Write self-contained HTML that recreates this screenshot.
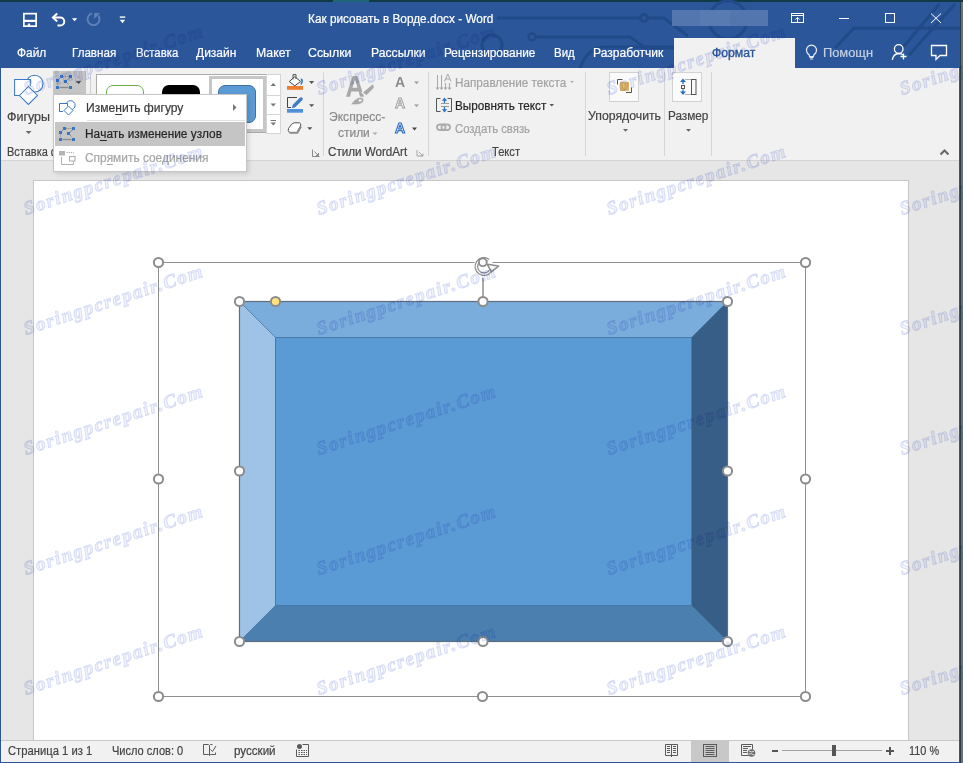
<!DOCTYPE html>
<html><head><meta charset="utf-8">
<style>
*{box-sizing:border-box;margin:0;padding:0}
html,body{width:963px;height:763px;overflow:hidden;background:#5a7886}
body{position:relative;font-family:"Liberation Sans",sans-serif;font-size:12px;color:#444}
.a{position:absolute}
.t{position:absolute;white-space:nowrap;line-height:1;transform-origin:0 0}
svg{position:absolute;overflow:visible}
.t{-webkit-text-stroke:0.2px currentColor}
u{text-decoration:none;border-bottom:1px solid currentColor;display:inline-block;line-height:0.95}
.wm{position:absolute;white-space:nowrap;line-height:1;font-family:"Liberation Serif",serif;font-style:italic;font-weight:bold;font-size:19px;
 letter-spacing:1.65px;color:rgba(230,233,250,0.5);-webkit-text-stroke:1px rgba(190,197,240,0.55);mix-blend-mode:multiply;
 transform-origin:0 15.9px;transform:rotate(-18.2deg);pointer-events:none}
</style></head><body>
<!-- window frame -->
<div class="a" style="left:0;top:0;width:960px;height:763px;background:#2b579a"></div>
<div class="a" style="left:960px;top:0;width:1px;height:763px;background:#2f3d43"></div>
<div class="a" style="left:0;top:0;width:963px;height:2px;background:#103a46"></div>
<div class="a" style="left:333px;top:0;width:36px;height:2px;background:#1f6478"></div>

<!-- circuit pattern -->
<svg style="left:0;top:0" width="960" height="68">
 <g stroke="#214b88" stroke-width="3.2" fill="none">
  <path d="M497 18 H640"/><circle cx="644" cy="18" r="3.5"/><path d="M648 18 H664 L688 36"/>
  <circle cx="532" cy="37" r="3.5" stroke-width="2.5"/><path d="M536 37 H630 L646 48 H674"/>
  <path d="M580 68 Q588 47 605 47 H674"/>
  <circle cx="492" cy="45" r="10"/>
  <circle cx="728" cy="20" r="19"/>
  <path d="M835 48 L854 28.2 H960"/>
  <path d="M901.5 49 L939.5 4" stroke-width="3.2"/><path d="M909 55 L955 4" stroke-width="3.2"/>
 </g>
</svg>

<!-- QAT -->
<svg style="left:0;top:0" width="140" height="36">
 <g fill="none" stroke="#fff" stroke-width="1.7">
  <rect x="23.85" y="13.65" width="12.3" height="12.5"/>
 </g>
 <rect x="24" y="19.8" width="12" height="2.2" fill="#fff"/>
 <rect x="27.8" y="23.6" width="2.4" height="2.6" fill="#fff"/>
 <path d="M53.5 17.4 H60.2 A4.1 4.1 0 0 1 60.2 25.6 H57.5" fill="none" stroke="#fff" stroke-width="2"/>
 <path d="M57.2 13.4 L53 17.4 L57.2 21.4" fill="none" stroke="#fff" stroke-width="2.1"/>
 <path d="M72 18.2 H77.2 L74.6 21.2 Z" fill="#fff"/>
 <path d="M92.1 13.3 A6.0 6.0 0 1 0 98.4 15.6" fill="none" stroke="#5e80b8" stroke-width="1.9"/>
 <path d="M94.2 13 H100 L94.2 19 Z" fill="#5e80b8"/>
 <rect x="119.8" y="16.4" width="5.4" height="1.4" fill="#fff"/>
 <path d="M119.8 19.8 H125.2 L122.5 23.2 Z" fill="#fff"/>
</svg>

<!-- blurred account name -->
<div class="a" style="left:672px;top:10px;width:96px;height:16px;background:#5276ad"></div>
<div class="a" style="left:700px;top:10px;width:30px;height:16px;background:#587cb2"></div>

<!-- window controls -->
<svg style="left:780px;top:0" width="180" height="36">
 <g fill="none" stroke="#fff" stroke-width="1">
  <rect x="11.5" y="13.5" width="12" height="9"/>
  <path d="M11.5 15.5 H23.5"/>
  <path d="M17.5 22 V17.5 M15.3 19.6 L17.5 17.4 L19.7 19.6"/>
  <path d="M59 18.5 H69"/>
  <rect x="105.5" y="13.5" width="9" height="9"/>
  <path d="M151 13.5 L161 23 M161 13.5 L151 23"/>
 </g>
</svg>

<!-- Format tab -->
<div class="a" style="left:674px;top:38px;width:121px;height:30px;background:#f1f1f1"></div>

<!-- tab icons -->
<svg style="left:800px;top:40px" width="160" height="25">
 <g fill="none" stroke="#e3e9f2" stroke-width="1.2">
  <path d="M9 14.5 A5 5 0 1 1 14 14.5 L13.5 16.5 H9.5 Z"/>
  <path d="M9.5 17.5 H13.5 M10 19 H13"/>
 </g>
 <g fill="none" stroke="#fff" stroke-width="1.3">
  <circle cx="98.7" cy="9" r="4.3"/>
  <path d="M92.3 19.8 Q93.5 13.8 98.7 13.5 Q101.5 13.5 103 15"/>
  <path d="M103.5 13.5 V19.5 M100.5 16.5 H106.5"/>
  <path d="M131.5 5.5 H146.5 V15.5 H140 L136 19.5 V15.5 H131.5 Z"/>
 </g>
</svg>

<!-- ribbon -->
<div class="a" style="left:1px;top:68px;width:958px;height:93px;background:#f1f1f1;border-bottom:1px solid #d4d4d4"></div>
<div class="a" style="left:323px;top:72px;width:1px;height:84px;background:#d6d6d6"></div>
<div class="a" style="left:428px;top:72px;width:1px;height:84px;background:#d6d6d6"></div>
<div class="a" style="left:585px;top:72px;width:1px;height:84px;background:#d6d6d6"></div>
<div class="a" style="left:664px;top:72px;width:1px;height:84px;background:#d6d6d6"></div>
<div class="a" style="left:711px;top:72px;width:1px;height:84px;background:#d6d6d6"></div>

<!-- Shapes big icon -->
<svg style="left:0;top:68px" width="60" height="70">
 <circle cx="34.6" cy="15.6" r="8.4" fill="#fff" stroke="#3c7ac4" stroke-width="1.05"/>
 <rect x="14.6" y="11.4" width="15.7" height="16" fill="#fff"/>
 <g fill="none" stroke="#3c7ac4" stroke-width="1.05">
  <path d="M30.3 18 V11.4 H14.6 V27.4 H19"/>
 </g>
 <path d="M28.4 18.5 L37.5 27.5 L28.4 36.4 L19.5 27.5 Z" fill="#fff" stroke="#3c7ac4" stroke-width="1.05"/>
 <path d="M25.6 63 H31.6 L28.6 66 Z" fill="#6a6a6a"/>
</svg>

<!-- Edit shape button (pressed) -->
<div class="a" style="left:53px;top:71px;width:33px;height:24px;background:#c5c5c5"></div>
<svg style="left:0;top:0" width="100" height="100">
 <g stroke="#8a8a8a" stroke-width="1" fill="none">
  <path d="M62.5 76.5 H69" stroke-dasharray="1.2 0.8"/>
  <path d="M58 80 L61 77"/>
  <path d="M70 77.5 L66 81"/>
  <path d="M66 82 L68.5 84.5"/>
  <path d="M59.5 87.5 H68.5" stroke-width="1.3"/>
  <path d="M57.5 82.5 V85" stroke-dasharray="1 1"/>
 </g>
 <g fill="#3476c4">
  <rect x="60" y="75" width="3" height="3"/><rect x="69" y="75" width="3" height="3"/>
  <rect x="56" y="79" width="3" height="3"/><rect x="64" y="80" width="3" height="3"/>
  <rect x="56" y="86" width="3" height="3"/><rect x="69" y="86" width="3" height="3"/>
 </g>
 <path d="M76 81.2 H81.2 L78.6 84 Z" fill="#444"/>
</svg>

<!-- Style gallery -->
<div class="a" style="left:90px;top:74px;width:1px;height:60px;background:#d0d0d0"></div>
<div class="a" style="left:96px;top:74px;width:171px;height:59px;background:#fff;border:1px solid #ababab;border-right:none"></div>
<div class="a" style="left:106px;top:85px;width:38px;height:38px;border:1.5px solid #70ad47;border-radius:7px;background:#fff"></div>
<div class="a" style="left:162px;top:84.5px;width:38px;height:38px;border-radius:7px;background:#000"></div>
<div class="a" style="left:209px;top:76px;width:57px;height:56px;border:3.5px solid #c6c6c6;background:#fff"></div>
<div class="a" style="left:218px;top:85px;width:38px;height:38px;border:1px solid #41719c;border-radius:7px;background:#5b9bd5"></div>
<div class="a" style="left:266px;top:74px;width:15px;height:60px;background:#fff;border:1px solid #d5d5d5"></div>
<div class="a" style="left:266px;top:95px;width:15px;height:1px;background:#d5d5d5"></div>
<div class="a" style="left:266px;top:114px;width:15px;height:1px;background:#d5d5d5"></div>
<svg style="left:266px;top:74px" width="15" height="60">
 <path d="M4.5 12 H10 L7.25 9 Z" fill="#777"/>
 <path d="M4.5 29.5 H10 L7.25 32.5 Z" fill="#777"/>
 <rect x="4.5" y="46" width="5.5" height="1" fill="#777"/>
 <path d="M4.5 48.5 H10 L7.25 51.5 Z" fill="#777"/>
</svg>

<!-- fill / outline / effects -->
<svg style="left:0;top:0" width="330" height="170">
 <path d="M294.8 76.6 L300.6 81.5 L294.8 85.8 L289.3 81.5 Z" fill="#fff" stroke="#444" stroke-width="1"/>
 <path d="M293 79.5 V74.6 H296 V79" fill="none" stroke="#555" stroke-width="1"/>
 <path d="M300.5 78.5 Q304 78.5 302.5 83 L300.8 85.5 Q300 83 301.5 81.5 Z" fill="#2e72c3"/>
 <rect x="287" y="86" width="16" height="3.8" fill="#ed7d31"/>
 <path d="M309 81 H314.2 L311.6 84 Z" fill="#555"/>
 <path d="M297 97.5 H287.5 V107.5 H291" fill="none" stroke="#444" stroke-width="1"/>
 <path d="M291.8 108.2 L292.8 104.8 L299.8 97.8 Q301.2 96.6 302.3 97.8 Q303.4 99 302.2 100.2 L295.2 107.2 Z" fill="#3c7cc6"/>
 <rect x="287" y="109" width="16" height="3.7" fill="#4f91d6"/>
 <path d="M309 104.2 H314.2 L311.6 107 Z" fill="#555"/>
 <path d="M288.5 128.5 Q292 122.8 294 122.8 H299.5 Q301.5 123.5 300.5 126 L297 132.5 H289.5 Q287.5 131 288.5 128.5 Z" fill="#fff" stroke="#555" stroke-width="1"/>
 <path d="M289.5 132.8 H297.3 L301 126.5" fill="none" stroke="#8a8a8a" stroke-width="2"/>
 <path d="M307.2 127.3 H312.4 L309.8 130 Z" fill="#555"/>
 <path d="M312.5 149.5 V156.5 H319.5" fill="none" stroke="#8a8a8a" stroke-width="1"/>
 <path d="M314.5 151.5 L318.5 155.5 M316 155.5 H318.5 V153" fill="none" stroke="#8a8a8a" stroke-width="1"/>
</svg>

<!-- WordArt group icons -->
<svg style="left:330px;top:68px" width="100" height="92">
 <text x="65" y="19" font-family="Liberation Sans" font-weight="bold" font-size="14" fill="#8c8c8c">A</text>
 <path d="M84 13.5 H89 L86.5 16 Z" fill="#9a9a9a"/>
 <text x="65" y="40" font-family="Liberation Sans" font-weight="bold" font-size="14" fill="#f1f1f1" stroke="#a0a0a0" stroke-width="0.9">A</text>
 <path d="M84 36.5 H89 L86.5 39 Z" fill="#9a9a9a"/>
 <text x="65" y="65" font-family="Liberation Sans" font-weight="bold" font-size="14" fill="#e8f0fb" stroke="#2f6fc0" stroke-width="1.1">A</text>
 <path d="M82 59.5 H87 L84.5 62.5 Z" fill="#444"/>
 <path d="M42.5 64.5 H47.5 L45 67 Z" fill="#aaa"/>
 <path d="M87 82 V88 H93" fill="none" stroke="#a8a8a8" stroke-width="1"/>
 <path d="M89 84 L93 88 M90.5 88 H93 V85.5" fill="none" stroke="#a8a8a8" stroke-width="1"/>
</svg>

<svg style="left:0;top:0" width="400" height="170">
 <path fill-rule="evenodd" d="M346 96.7 L352.6 76 H357.3 L364 96.7 H360 L358.7 91.5 H351.3 L350 96.7 Z M352.4 87.8 L355 80 L357.6 87.8 Z" fill="#a8a8a8"/>
 <path d="M373.5 83 L374.5 88 L366.5 96 L362 92.5 Z" fill="#a8a8a8" stroke="#f1f1f1" stroke-width="1.2"/>
 <path d="M350.5 104.8 Q354 99 358.5 97.5 Q363 96.5 364 100 Q363.5 104 357 104.8 Z" fill="#a8a8a8" stroke="#f1f1f1" stroke-width="0.8"/>
 <path d="M358.5 99.5 Q361.5 98.7 362 100.5 Q361 102 359 101.5 Z" fill="#f4f4f8"/>
</svg>
<!-- Text group icons -->
<svg style="left:0;top:0" width="600" height="170">
 <g stroke="#a8a8a8" stroke-width="1" fill="none">
  <path d="M437.5 75 V89 M441.5 75 V89 M445.5 83 V89 M449.5 83 V89"/>
  <path d="M444.5 81.5 L447.8 74 L451 81.5 M445.8 79 H449.8"/>
 </g>
 <path d="M435.5 87.5 H439.5 L437.5 90 Z M439.5 87.5 H443.5 L441.5 90 Z M443.5 87.5 H447.5 L445.5 90 Z M447.5 87.5 H451.5 L449.5 90 Z" fill="#a8a8a8"/>
 <path d="M570 81 H574 L572 83 Z" fill="#aaa"/>
 <g stroke="#555" stroke-width="1" fill="none">
  <path d="M440.5 98.5 H436.5 V111.5 H440.5 M447.5 98.5 H451.5 V111.5 H447.5"/>
 </g>
 <path d="M441 103.5 H449 M441 106.5 H449" stroke="#9a9a9a" stroke-width="1"/>
 <path d="M444.5 97.5 L441.8 100.8 H447.2 Z M444.5 112.5 L441.8 109.2 H447.2 Z" fill="#2e72c3"/>
 <path d="M444.5 100 V103 M444.5 107 V110" stroke="#2e72c3" stroke-width="1.3"/>
 <path d="M549.5 104 H554 L551.75 106.5 Z" fill="#555"/>
 <g stroke="#ababab" stroke-width="1.8" fill="none">
  <rect x="437" y="124.5" width="8.5" height="5.5" rx="2.75"/>
  <rect x="441.5" y="124.5" width="8.5" height="5.5" rx="2.75"/>
 </g>
</svg>

<!-- Arrange / Size -->
<div class="a" style="left:609px;top:72px;width:30px;height:30px;background:#fafafa;border:1px solid #d2d2d2"></div>
<div class="a" style="left:672px;top:72px;width:30px;height:30px;background:#fafafa;border:1px solid #d2d2d2"></div>
<svg style="left:0;top:0" width="720" height="170">
 <rect x="620" y="82" width="9" height="9" fill="#e3b76a"/>
 <path d="M617.5 84.5 V79.5 H622.5 M626 92.5 H631.5 V87.5" fill="none" stroke="#555" stroke-width="1"/>
 <path d="M683 78.5 L680 82 H686 Z M683 95 L680 91.5 H686 Z" fill="#2e6fbf"/>
 <path d="M683 81.5 V84 M683 89.5 V92" stroke="#2e6fbf" stroke-width="1.4"/>
 <rect x="681.5" y="85.5" width="3" height="3" fill="none" stroke="#555" stroke-width="1"/>
 <path d="M685.5 79.5 H690.5 M685.5 94.5 H690.5" stroke="#666" stroke-dasharray="1 1"/>
 <rect x="691.5" y="79.5" width="4.5" height="15" fill="none" stroke="#555" stroke-width="1"/>
 <path d="M623 129 H628 L625.5 131.8 Z" fill="#666"/>
 <path d="M686 129 H691 L688.5 131.8 Z" fill="#666"/>
</svg>
<!-- collapse arrow -->
<svg style="left:935px;top:145px" width="20" height="12">
 <path d="M5.5 9.5 L9.5 5.5 L13.5 9.5" fill="none" stroke="#666" stroke-width="2"/>
</svg>

<!-- document area -->
<div class="a" style="left:1px;top:161px;width:958px;height:580px;background:#e6e6e6"></div>
<div class="a" style="left:33px;top:180px;width:876px;height:561px;background:#fff;border:1px solid #c6c6c6;border-bottom:none"></div>

<!-- shape -->
<svg style="left:0;top:0" width="963" height="763">
 <polygon points="239,301 728,301 692,337 275,337" fill="#7aacdc"/>
 <polygon points="239,301 275,337 275,606 239,642" fill="#9fc3e7"/>
 <polygon points="728,301 728,642 692,606 692,337" fill="#375e87"/>
 <polygon points="239,642 275,606 692,606 728,642" fill="#4a7fb0"/>
 <rect x="275" y="337" width="417" height="269" fill="#5b9bd5"/>
 <g stroke="#41719c" stroke-width="1" fill="none" stroke-opacity="0.8">
  <path d="M239.5 301.5 L275.5 337.5 H691.5 L727.5 301.5 M275.5 337.5 V605.5 H691.5 V337.5 M239.5 641.5 L275.5 605.5 M691.5 605.5 L727.5 641.5"/>
 </g>
 <rect x="239.5" y="301.5" width="488" height="340" fill="none" stroke="#5f6f80" stroke-width="1.2"/>
 <!-- selection frame -->
 <rect x="158.5" y="262.5" width="647" height="434" fill="none" stroke="#8f8f8f" stroke-width="1"/>
 <path d="M483 276 V297" stroke="#8f8f8f" stroke-width="1.5"/>
 <g fill="#fff" stroke="#8c8c8c" stroke-width="2">
  <circle cx="158.5" cy="262.5" r="4.6"/><circle cx="805.5" cy="262.5" r="4.6"/>
  <circle cx="158.5" cy="479" r="4.6"/><circle cx="805.5" cy="479" r="4.6"/>
  <circle cx="158.5" cy="696.5" r="4.6"/><circle cx="482.5" cy="696.5" r="4.6"/><circle cx="805.5" cy="696.5" r="4.6"/>
  <circle cx="239.5" cy="301.5" r="4.6"/><circle cx="483" cy="301.5" r="4.6"/><circle cx="727.5" cy="301.5" r="4.6"/>
  <circle cx="239.5" cy="471" r="4.6"/><circle cx="727.5" cy="471" r="4.6"/>
  <circle cx="239.5" cy="641.5" r="4.6"/><circle cx="483" cy="641.5" r="4.6"/><circle cx="727.5" cy="641.5" r="4.6"/>
 </g>
 <circle cx="275.5" cy="301.5" r="4.6" fill="#ffe27a" stroke="#8c8c8c" stroke-width="2"/>
 <!-- rotation handle -->
 <rect x="474.5" y="258" width="18" height="20" fill="#fff"/>
 <path d="M488.5 260.2 A7.7 7.7 0 1 0 490.3 271" fill="none" stroke="#8c8c8c" stroke-width="3.8"/>
 <path d="M488.5 260.2 A7.7 7.7 0 1 0 490.3 271" fill="none" stroke="#fff" stroke-width="1.3"/>
 <path d="M487.2 264.2 L498.5 266.1 L491.4 271.8 Z" fill="#fff" stroke="#8c8c8c" stroke-width="1.5" stroke-linejoin="round"/>
 <circle cx="482.8" cy="262.3" r="3.9" fill="#fff" stroke="#8c8c8c" stroke-width="1.8"/>
</svg>

<!-- status bar -->
<div class="a" style="left:1px;top:740px;width:958px;height:22px;background:#f1f1f1;border-top:1px solid #c8c8c8"></div>
<div class="a" style="left:691px;top:741px;width:38px;height:21px;background:#c8c8c8"></div>
<svg style="left:0;top:740px" width="960" height="22">
 <g fill="none" stroke="#5a5a5a" stroke-width="1">
  <path d="M203.5 4.5 H208.5 L209.5 5.5 V15.5 L208.5 14.5 H203.5 Z M209.5 5.5 L210.5 4.5 H212.5"/>
  <path d="M210.5 9.5 L212.5 11.5 L216 6"/>
  <path d="M209.5 15.5 L210.5 14.5 H215.5 V12.5"/>
 </g>
 <circle cx="299.5" cy="6.5" r="2.5" fill="#5a5a5a"/>
 <g fill="none" stroke="#5a5a5a" stroke-width="1">
  <path d="M302.5 4.5 H308.5 V16.5 H296.5 V9.5"/>
  <path d="M298.5 10.5 H307 M298.5 12.5 H307 M298.5 14.5 H307" stroke-dasharray="1.5 1"/>
 </g>
 <g fill="none" stroke="#5a5a5a" stroke-width="1">
  <path d="M665.5 4.5 H671.5 V15.5 H665.5 Z M671.5 4.5 H677.5 V15.5 H671.5"/>
  <path d="M667 6.5 H670 M667 8.5 H670 M667 10.5 H670 M667 12.5 H670 M673 6.5 H676 M673 8.5 H676 M673 10.5 H676 M673 12.5 H676"/>
  <path d="M671.5 15.5 V17"/>
  <rect x="703.5" y="4.5" width="13" height="12"/>
  <path d="M705.5 6.5 H714.5 M705.5 8.5 H714.5 M705.5 10.5 H714.5 M705.5 12.5 H714.5 M705.5 14.5 H714.5"/>
  <path d="M748.5 15.5 H741.5 V4.5 H752.5 V9.5"/>
  <path d="M743 6.5 H751 M743 8.5 H748 M743 10.5 H747 M743 12.5 H747"/>
 </g>
 <circle cx="751.5" cy="13" r="3.8" fill="#6a6a6a"/>
 <path d="M749 11 Q751 12.5 754 11.5 M748.5 14 Q751 13 754.5 15" stroke="#f1f1f1" stroke-width="0.9" fill="none"/>
 <rect x="772" y="10" width="6" height="2" fill="#555"/>
 <rect x="782" y="10" width="100" height="1" fill="#a0a0a0"/>
 <rect x="832" y="5" width="4" height="11" fill="#555"/>
 <path d="M886 11 H894 M890 7 V15" stroke="#555" stroke-width="2"/>
</svg>

<div class="t" style="left:307.6px;top:12.8px;font-size:12px;color:#fff;transform:scaleX(0.9839);">Как рисовать в Ворде.docx - Word</div>
<div class="t" style="left:16.7px;top:47.0px;font-size:12px;color:#fff;transform:scaleX(0.9927);">Файл</div>
<div class="t" style="left:71.7px;top:47.0px;font-size:12px;color:#fff;transform:scaleX(0.9674);">Главная</div>
<div class="t" style="left:135.8px;top:47.0px;font-size:12px;color:#fff;transform:scaleX(0.9460);">Вставка</div>
<div class="t" style="left:196.4px;top:47.0px;font-size:12px;color:#fff;transform:scaleX(1.0014);">Дизайн</div>
<div class="t" style="left:255.6px;top:47.0px;font-size:12px;color:#fff;transform:scaleX(1.0215);">Макет</div>
<div class="t" style="left:308.4px;top:47.0px;font-size:12px;color:#fff;transform:scaleX(1.0296);">Ссылки</div>
<div class="t" style="left:370.8px;top:47.0px;font-size:12px;color:#fff;transform:scaleX(1.0138);">Рассылки</div>
<div class="t" style="left:443.9px;top:47.0px;font-size:12px;color:#fff;transform:scaleX(0.9863);">Рецензирование</div>
<div class="t" style="left:553.7px;top:47.0px;font-size:12px;color:#fff;transform:scaleX(0.9531);">Вид</div>
<div class="t" style="left:592.9px;top:47.0px;font-size:12px;color:#fff;transform:scaleX(1.0045);">Разработчик</div>
<div class="t" style="left:712.2px;top:47.0px;font-size:12px;color:#2b579a;transform:scaleX(1.0178);-webkit-text-stroke:0.35px currentColor">Формат</div>
<div class="t" style="left:822.8px;top:46.8px;font-size:12px;color:#c3cfe2;transform:scaleX(1.0699);">Помощн</div>
<div class="t" style="left:6.9px;top:110.7px;font-size:12px;color:#444;transform:scaleX(1.0393);">Фигуры</div>
<div class="t" style="left:7.3px;top:145.8px;font-size:12px;color:#444;transform:scaleX(0.9148);">Вставка фигур</div>
<div class="t" style="left:329.4px;top:111.0px;font-size:12px;color:#8a8a8a;transform:scaleX(1.0079);">Экспресс-</div>
<div class="t" style="left:338.2px;top:126.8px;font-size:12px;color:#8a8a8a;transform:scaleX(0.9967);">стили</div>
<div class="t" style="left:328.1px;top:145.8px;font-size:12px;color:#444;transform:scaleX(0.9694);">Стили WordArt</div>
<div class="t" style="left:455.1px;top:77.3px;font-size:12px;color:#a3a3a3;transform:scaleX(0.9774);">Направление текста</div>
<div class="t" style="left:455.1px;top:100.0px;font-size:12px;color:#262626;transform:scaleX(0.9766);">Выровнять текст</div>
<div class="t" style="left:455.1px;top:123.3px;font-size:12px;color:#a3a3a3;transform:scaleX(0.9441);">Создать связь</div>
<div class="t" style="left:492.4px;top:145.7px;font-size:12px;color:#444;transform:scaleX(0.9266);">Текст</div>
<div class="t" style="left:588.4px;top:109.6px;font-size:12px;color:#444;transform:scaleX(1.0221);">Упорядочить</div>
<div class="t" style="left:667.9px;top:109.6px;font-size:12px;color:#444;transform:scaleX(0.9794);">Размер</div>
<div class="t" style="left:8.0px;top:745.3px;font-size:12px;color:#444;transform:scaleX(0.9372);">Страница 1 из 1</div>
<div class="t" style="left:112.0px;top:745.3px;font-size:12px;color:#444;transform:scaleX(0.9202);">Число слов: 0</div>
<div class="t" style="left:234.2px;top:745.3px;font-size:12px;color:#444;transform:scaleX(0.9660);">русский</div>
<div class="t" style="left:909.2px;top:745.3px;font-size:12px;color:#444;transform:scaleX(0.9083);">110 %</div>

<!-- dropdown menu -->
<div class="a" style="left:55px;top:96px;width:194px;height:78px;background:rgba(0,0,0,0.12);filter:blur(2px)"></div>
<div class="a" style="left:53px;top:94px;width:194px;height:78px;background:#fff;border:1px solid #c6c6c6"></div>
<div class="a" style="left:87px;top:120px;width:158px;height:1px;background:#e1e1e1"></div>
<div class="a" style="left:55px;top:122px;width:190px;height:24px;background:#c5c5c5"></div>
<svg style="left:0;top:0" width="260" height="180">
 <circle cx="70.5" cy="105.3" r="4.6" fill="#fff" stroke="#3a77c0" stroke-width="1"/>
 <rect x="59.5" y="103.5" width="8" height="8" fill="#fff"/>
 <g fill="#fff" stroke="#3a77c0" stroke-width="1">
  <path d="M67.5 106 V103.5 H59.5 V111.5 H63" fill="none"/>
  <path d="M68.5 106 L73 110.5 L68.5 115 L64 110.5 Z"/>
 </g>
 <path d="M233 104 L236.5 107.5 L233 111 Z" fill="#777"/>
 <g transform="translate(3,52)">
 <g stroke="#8a8a8a" stroke-width="1" fill="none">
  <path d="M62.5 76.5 H69" stroke-dasharray="1.2 0.8"/>
  <path d="M58 80 L61 77"/>
  <path d="M70 77.5 L66 81"/>
  <path d="M66 82 L68.5 84.5"/>
  <path d="M59.5 87.5 H68.5" stroke-width="1.3"/>
  <path d="M57.5 82.5 V85" stroke-dasharray="1 1"/>
 </g>
 <g fill="#3476c4">
  <rect x="60" y="75" width="3" height="3"/><rect x="69" y="75" width="3" height="3"/>
  <rect x="56" y="79" width="3" height="3"/><rect x="64" y="80" width="3" height="3"/>
  <rect x="56" y="86" width="3" height="3"/><rect x="69" y="86" width="3" height="3"/>
 </g>
 </g>
 <rect x="59" y="151" width="6" height="4.5" fill="#b4b4b4"/>
 <path d="M66.5 152.5 H73.5 V154.5" fill="none" stroke="#aaa" stroke-dasharray="1.2 1"/>
 <path d="M61.5 157 V164.5 H73.5 V161.5" fill="none" stroke="#b0b0b0" stroke-width="1"/>
 <rect x="69.5" y="156.5" width="5.5" height="4.5" fill="#fff" stroke="#aaa" stroke-width="1"/>
</svg>
<div class="t" style="left:85.6px;top:101.9px;font-size:12px;color:#3a3a3a;transform:scaleX(1.0056);">Изме<u>н</u>ить фигуру</div>
<div class="t" style="left:85.4px;top:128.1px;font-size:12px;color:#262626;transform:scaleX(0.9895);">На<u>ч</u>ать изменение узлов</div>
<div class="t" style="left:85.4px;top:151.5px;font-size:12px;color:#a6a6a6;transform:scaleX(0.9920);">Спр<u>я</u>мить соединения</div>

<div class="wm" style="left:25.5px;top:79.1px">Soringpcrepair.Com</div>
<div class="wm" style="left:318.5px;top:79.1px">Soringpcrepair.Com</div>
<div class="wm" style="left:608.5px;top:79.1px">Soringpcrepair.Com</div>
<div class="wm" style="left:901.5px;top:79.1px">Soringpcrepair.Com</div>
<div class="wm" style="left:25.5px;top:199.1px">Soringpcrepair.Com</div>
<div class="wm" style="left:318.5px;top:199.1px">Soringpcrepair.Com</div>
<div class="wm" style="left:608.5px;top:199.1px">Soringpcrepair.Com</div>
<div class="wm" style="left:901.5px;top:199.1px">Soringpcrepair.Com</div>
<div class="wm" style="left:25.5px;top:319.1px">Soringpcrepair.Com</div>
<div class="wm" style="left:318.5px;top:319.1px">Soringpcrepair.Com</div>
<div class="wm" style="left:608.5px;top:319.1px">Soringpcrepair.Com</div>
<div class="wm" style="left:901.5px;top:319.1px">Soringpcrepair.Com</div>
<div class="wm" style="left:25.5px;top:439.1px">Soringpcrepair.Com</div>
<div class="wm" style="left:318.5px;top:439.1px">Soringpcrepair.Com</div>
<div class="wm" style="left:608.5px;top:439.1px">Soringpcrepair.Com</div>
<div class="wm" style="left:901.5px;top:439.1px">Soringpcrepair.Com</div>
<div class="wm" style="left:25.5px;top:559.1px">Soringpcrepair.Com</div>
<div class="wm" style="left:318.5px;top:559.1px">Soringpcrepair.Com</div>
<div class="wm" style="left:608.5px;top:559.1px">Soringpcrepair.Com</div>
<div class="wm" style="left:901.5px;top:559.1px">Soringpcrepair.Com</div>
<div class="wm" style="left:25.5px;top:679.1px">Soringpcrepair.Com</div>
<div class="wm" style="left:318.5px;top:679.1px">Soringpcrepair.Com</div>
<div class="wm" style="left:608.5px;top:679.1px">Soringpcrepair.Com</div>
<div class="wm" style="left:901.5px;top:679.1px">Soringpcrepair.Com</div>
</body></html>
